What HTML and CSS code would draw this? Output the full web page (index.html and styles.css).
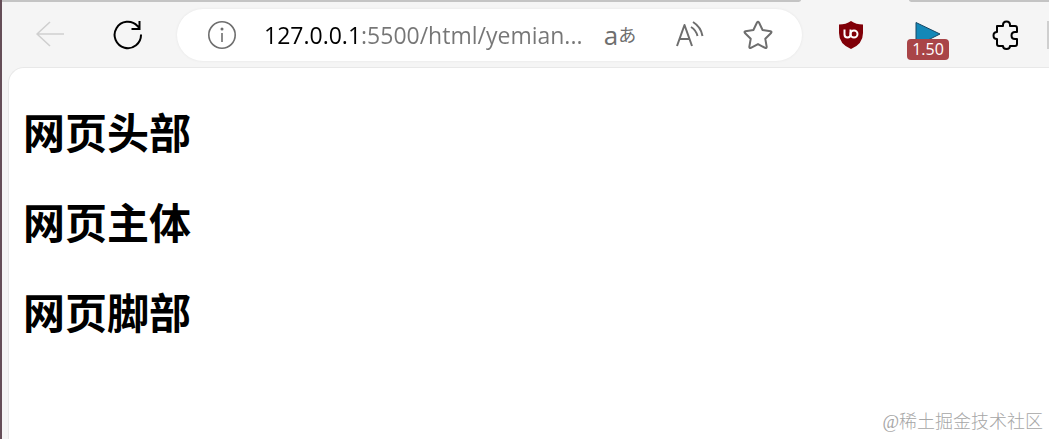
FILE: index.html
```html
<!DOCTYPE html>
<html lang="zh-CN">
<head>
  <meta charset="UTF-8">
  <meta name="viewport" content="width=device-width, initial-scale=1.0">
  <title>网页</title>
  <link rel="stylesheet" href="styles.css">
</head>
<body>

<div class="tabs">
  <div class="tab tab-left"></div>
  <div class="tab tab-right"></div>
</div>

<header class="toolbar">
  <div class="nav">
    <button type="button" class="back" aria-label="后退" disabled>
      <svg width="30" height="30" viewBox="0 0 30 30"><path d="M29 14H2M15 2L2 14l13 12"/></svg>
    </button>
    <button type="button" class="reload" aria-label="刷新">
      <svg width="30" height="30" viewBox="0 0 30 30"><path d="M28 14.500A13.200 13.200 0 1 1 24.500 6l2 2.500M26.500 1v8h-8"/></svg>
    </button>
  </div>

  <form class="address">
    <button type="button" aria-label="网站信息">
      <svg width="30" height="30" viewBox="0 0 30 30"><circle cx="15" cy="15" r="13.200"/><path d="M15 13v9"/><circle class="dot" cx="15" cy="9" r="1.500"/></svg>
    </button>
    <input type="text" class="url" aria-label="地址" value="127.0.0.1:5500/html/yemian...">
    <button type="button" class="translate" aria-label="翻译"><span>a</span><span class="kana">あ</span></button>
    <button type="button" class="read" aria-label="大声朗读">
      <svg width="30" height="30" viewBox="0 0 30 30"><path d="M2 26L9.500 5L17 26M5 19h9.500M16 7q5 3 6.500 9M18 2q8 5 9.500 14"/></svg>
    </button>
    <button type="button" class="favorite" aria-label="收藏">
      <svg width="30" height="30" viewBox="0 0 30 30"><path d="M14 2.500q1-1.500 2 0l3.600 7.500 7.900 1.200q1.600.4.600 1.800l-5.800 5.800 1.400 8q0 1.700-1.600 1.100L15 24.100l-7.100 3.800q-1.600.6-1.600-1.100l1.400-8L1.900 13q-1-1.400.6-1.800l7.900-1.200z"/></svg>
    </button>
  </form>

  <div class="extensions">
    <button type="button" aria-label="uBlock Origin">
      <svg class="ublock" width="26" height="28" viewBox="0 0 26 28"><path class="shield" d="M13 0Q18 3.500 25 3.500V12Q25 23 13 28Q1 23 1 12V3.500Q8 3.500 13 0z"/><path class="mark" d="M6.500 8.500v5q0 3 3 3t3-3v-5"/><circle class="mark" cx="16" cy="13" r="3.500"/></svg>
    </button>
    <button type="button" class="speed" aria-label="视频速度 1.50">
      <svg width="26" height="28" viewBox="0 0 26 28"><path d="M1 1.500L25 13L1 25z"/></svg>
      <span class="badge">1.50</span>
    </button>
    <button type="button" class="puzzle" aria-label="扩展">
      <svg width="28" height="30" viewBox="0 0 28 30"><path d="M5 6h6V5q0-3.500 3.500-3.500T18 5v1h5q2 0 2 2v4h-2q-3.500 0-3.500 3.500T23 19h2v5q0 2-2 2h-5q0 3-3.500 3T11 26H7q-2 0-2-2v-5q-3.500 0-3.500-3.500T5 12z"/></svg>
    </button>
    <span class="divider"></span>
  </div>
</header>

<main class="page">
  <h2>网页头部</h2>
  <h2>网页主体</h2>
  <h2>网页脚部</h2>
  <span class="watermark">@稀土掘金技术社区</span>
</main>

</body>
</html>
```
FILE: styles.css
```css
* {
  box-sizing: border-box;
}

body {
  display: flex;
  flex-direction: column;
  min-height: 100vh;
  margin: 0;
  border-left: 2px solid #654e58;
  background-color: #f5f5f5;
  font-family: "Open Sans", "Noto Sans CJK SC", sans-serif;
}

.tabs {
  display: flex;
  justify-content: space-between;
  height: 2px;
}

.tab {
  background-color: #c4c4c4;
}

.tab-left {
  flex: 1;
  margin-right: 108px;
  border-bottom-right-radius: 4px 2px;
}

.tab-right {
  width: 140px;
  border-bottom-left-radius: 4px 2px;
}

.toolbar {
  display: flex;
  align-items: center;
  height: 65px;
}

button {
  display: flex;
  align-items: center;
  justify-content: center;
  flex: none;
  padding: 0;
  border: none;
  background: none;
  color: #6e6e6e;
  font-family: inherit;
}

svg {
  display: block;
  fill: none;
  stroke: currentColor;
  stroke-width: 1.6;
  stroke-linejoin: round;
}

.dot {
  fill: currentColor;
  stroke: none;
}

.nav {
  display: flex;
  gap: 48px;
  padding: 0 34px 0 33px;
}

.back {
  color: #cfcfcf;
}

.reload {
  color: #000;
}

.reload svg {
  stroke-width: 2;
  stroke-linejoin: miter;
}

.address {
  display: flex;
  align-items: center;
  flex: 1;
  min-width: 0;
  height: 52px;
  padding: 0 29px 0 30px;
  border-radius: 26px;
  background-color: #fff;
  box-shadow: 0 0 3px rgba(0, 0, 0, 0.07);
}

/* host in black, the rest of the address in grey */
.url {
  flex: 1;
  min-width: 0;
  height: 40px;
  margin: 0 16px 0 27px;
  padding: 0;
  border: none;
  outline: none;
  background: linear-gradient(to right, #000 98px, #767676 98px);
  background-clip: text;
  -webkit-background-clip: text;
  color: transparent;
  font-family: inherit;
  font-size: 23px;
}

.translate {
  width: 34px;
  height: 30px;
  font-family: "Open Sans", "Noto Sans CJK JP", sans-serif;
  font-size: 26px;
  line-height: 24px;
}

.kana {
  font-size: 18px;
}

.read {
  margin-left: 38px;
}

.read svg,
.favorite svg {
  stroke-width: 2;
}

.favorite {
  margin-left: 38px;
}

.extensions {
  display: flex;
  align-items: center;
  gap: 51px;
  padding-left: 36px;
}

.ublock .shield {
  fill: #800008;
  stroke: none;
}

.ublock .mark {
  stroke: #fff;
  stroke-width: 2;
}

.speed {
  position: relative;
}

.speed svg {
  fill: #1488b8;
  stroke: #174866;
  stroke-width: 1;
}

.badge {
  position: absolute;
  top: 18px;
  left: -8px;
  width: 42px;
  border-radius: 4px;
  background-color: #a94548;
  color: #fff;
  font-size: 16px;
  line-height: 21px;
}

.puzzle {
  color: #000;
}

.puzzle svg {
  stroke-width: 2;
}

.divider {
  width: 2px;
  height: 28px;
  margin-left: -24px;
  background-color: #cfcfcf;
}

.page {
  position: relative;
  flex: 1;
  margin-left: 6px;
  padding: 35px 14px;
  border-top: 1px solid #e8e8e8;
  border-left: 1px solid #e8e8e8;
  border-top-left-radius: 16px;
  background-color: #fff;
}

h2 {
  margin: 0 0 30px;
  color: #000;
  font-size: 42px;
  line-height: 60px;
}

.watermark {
  position: absolute;
  right: 6px;
  bottom: 4px;
  color: #a6a6a6;
  font-family: "Liberation Serif", "Noto Sans CJK SC", serif;
  font-size: 18px;
  font-weight: 300;
  line-height: 26px;
}
```
